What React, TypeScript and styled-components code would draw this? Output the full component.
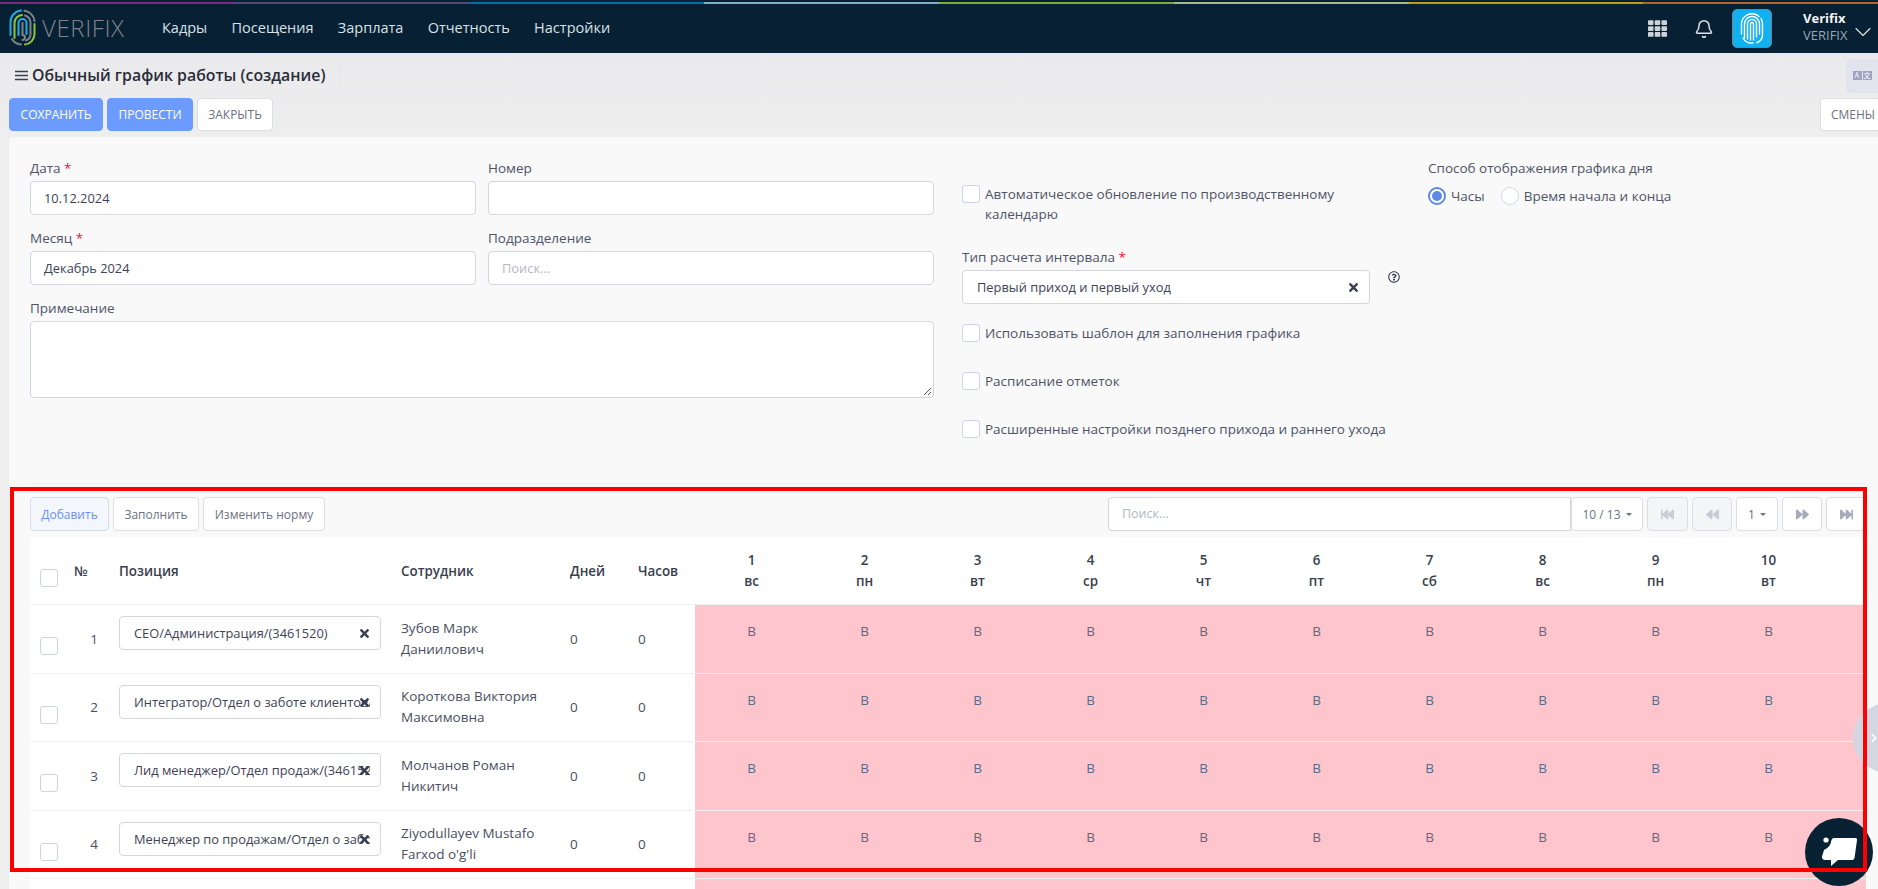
import React from 'react';
import styled, { createGlobalStyle } from 'styled-components';
import { Bell, ChevronDown, ChevronRight } from 'lucide-react';
import { FaTimes, FaRegQuestionCircle, FaFastBackward, FaBackward, FaForward, FaFastForward, FaTh } from 'react-icons/fa';

const Global = createGlobalStyle`
  html, body { margin: 0; padding: 0; height: 100%; overflow: hidden; }
  body { font-family: "Open Sans", "Liberation Sans", sans-serif; font-size: 13.5px; color: #3f4254; background: #ececed; }
  * { box-sizing: border-box; }
`;

const Page = styled.div`
  position: relative;
  width: 1878px;
  height: 889px;
  overflow: hidden;
  display: flex;
  flex-direction: column;
  background: linear-gradient(#e8e8ea, #eeeeef 140px);
`;

const Nav = styled.header`
  flex: none;
  height: 53px;
  background: #072033;
  padding-top: 2px;
  display: flex;
  flex-direction: column;
`;
const Strip = styled.div`
  display: grid;
  grid-template-columns: repeat(8, 1fr);
  height: 2px;
  flex: none;
`;
const StripPart = styled.span<{ $c: string }>`
  background: ${p => p.$c};
`;
const NavBody = styled.div`
  flex: 1;
  display: flex;
  align-items: center;
  padding: 0 1px 0 9px;
`;
const LogoWrap = styled.div`
  display: flex;
  align-items: center;
  width: 153px;
  margin-top: -2px;
`;
const LogoText = styled.span`
  margin-left: 6px;
  font-size: 24px;
  font-weight: 300;
  letter-spacing: 0.6px;
  color: #7d858b;
  line-height: 1;
`;
const NavLinks = styled.nav`
  display: flex;
  gap: 24.3px;
  margin-top: -3px;
`;
const NavLink = styled.span`
  color: #d9e0e6;
  font-size: 14.5px;
`;
const NavRight = styled.div`
  margin-left: auto;
  display: flex;
  align-items: center;
`;
const GridIcon = styled(FaTh)`
  width: 19px;
  height: 19px;
  color: #cfd3d9;
  margin-right: 27px;
`;
const BellIcon = styled(Bell)`
  color: #dfe3e7;
  margin-right: 18px;
`;
const AppButton = styled.div`
  width: 40px;
  height: 39px;
  border-radius: 5px;
  background: #0fb1f1;
  border: 1px solid #71828f;
  display: flex;
  align-items: center;
  justify-content: center;
  margin-right: 31px;
`;
const UserBlock = styled.div`
  display: flex;
  flex-direction: column;
  font-size: 13px;
  line-height: 17px;
  width: 46px;
  white-space: nowrap;
  margin-top: -4px;
`;
const UserName = styled.span`
  color: #f2f4f6;
  font-weight: 700;
`;
const UserOrg = styled.span`
  color: #9aa6b2;
`;
const UserCaret = styled(ChevronDown)`
  color: #d9e0e6;
  margin-top: 6px;
`;

const TitleRow = styled.div`
  flex: none;
  height: 45px;
  display: flex;
  align-items: center;
  padding-left: 15px;
`;
const TitleBox = styled.div`
  display: flex;
  align-items: center;
  gap: 4px;
  height: 26px;
  width: 325px;
  border-right: 1px solid #e6e6e7;
`;
const Burger = styled.svg`
  width: 13px;
  height: 11px;
  flex: none;
`;
const Title = styled.h1`
  margin: 0 0 2px;
  font-size: 15.85px;
  font-weight: 600;
  color: #2a2d3a;
`;
const LangChip = styled.div`
  margin-left: auto;
  width: 32px;
  height: 34px;
  background: #e2e3ec;
  border-radius: 5px 0 0 5px;
  display: flex;
  align-items: center;
  justify-content: center;
  gap: 1px;
`;
const LangMark = styled.span`
  width: 9px;
  height: 9px;
  background: #9ea3c1;
  color: #fff;
  font-size: 7px;
  line-height: 9px;
  text-align: center;
  font-family: "Noto Sans CJK SC", "Open Sans", sans-serif;
`;

const ActionRow = styled.div`
  flex: none;
  height: 33px;
  display: flex;
  gap: 4px;
  padding-left: 9px;
  margin-right: -8px;
`;
const ActionButton = styled.button<{ $primary?: boolean; $w: number; $right?: boolean }>`
  width: ${p => p.$w}px;
  height: 33px;
  padding: 0;
  border-radius: 4px;
  font-family: inherit;
  font-size: 12px;
  background: ${p => (p.$primary ? '#6b9bff' : '#fff')};
  color: ${p => (p.$primary ? '#fff' : '#6c7080')};
  border: 1px solid ${p => (p.$primary ? '#6b9bff' : '#dcdee4')};
  margin-left: ${p => (p.$right ? 'auto' : '0')};
`;

const Card = styled.main`
  flex: 1;
  margin: 6px 0 0 9px;
  background: #f9f9f9;
  border-radius: 4px 0 0 0;
  padding: 20px 12px 0 21px;
  min-height: 0;
`;
const FormGrid = styled.section`
  display: grid;
  grid-template-columns: 904px 438px 1fr;
  column-gap: 28px;
  height: 327px;
  border-bottom: 1px solid #eeeeee;
`;
const LeftForm = styled.div`
  display: grid;
  grid-template-columns: 446px 446px;
  column-gap: 12px;
  row-gap: 12px;
  align-content: start;
`;
const Field = styled.div<{ $wide?: boolean }>`
  grid-column: ${p => (p.$wide ? '1 / -1' : 'auto')};
`;
const Label = styled.label`
  display: block;
  font-size: 13.5px;
  line-height: 22px;
  margin-bottom: 2px;
  color: #4f5366;
`;
const Req = styled.span`
  color: #f4121e;
`;
const Input = styled.div<{ $placeholder?: boolean }>`
  height: 34px;
  background: #fff;
  border: 1px solid #d3d6df;
  border-radius: 4px;
  padding: 0 13px;
  font-size: 12.85px;
  line-height: 32px;
  color: ${p => (p.$placeholder ? '#b5b7c2' : '#3f4254')};
`;
const TextArea = styled.div`
  position: relative;
  height: 77px;
  background: #fff;
  border: 1px solid #d3d6df;
  border-radius: 4px;
`;
const Resizer = styled.svg`
  position: absolute;
  right: 1px;
  bottom: 1px;
  width: 10px;
  height: 10px;
`;
const MiddleForm = styled.div`
  display: flex;
  flex-direction: column;
`;
const CheckRow = styled.label<{ $top: number; $max?: number }>`
  display: flex;
  gap: 5px;
  align-items: flex-start;
  margin-top: ${p => p.$top}px;
  font-size: 13.5px;
  line-height: 20px;
  max-width: ${p => (p.$max ? `${p.$max}px` : 'none')};
  color: #4f5366;
  white-space: ${p => (p.$max ? 'normal' : 'nowrap')};
`;
const CheckBox = styled.span`
  flex: none;
  display: block;
  width: 18px;
  height: 18px;
  margin-top: 1px;
  background: #fff;
  border: 1px solid #cdd2e4;
  border-radius: 3px;
`;
const TypeField = styled.div`
  margin-top: 22px;
`;
const TypeRow = styled.div`
  display: flex;
  gap: 18px;
`;
const SelectBox = styled.div<{ $w: number }>`
  position: relative;
  flex: none;
  width: ${p => p.$w}px;
  height: 34px;
  background: #fff;
  border: 1px solid #d3d6df;
  border-radius: 4px;
  padding: 0 10px 0 14px;
  font-size: 12.85px;
  line-height: 32px;
  color: #3f4254;
`;
const SelectText = styled.span`
  display: block;
  white-space: nowrap;
  overflow: hidden;
`;
const ClearIcon = styled(FaTimes)`
  position: absolute;
  right: 9px;
  top: 10px;
  width: 13px;
  height: 13px;
  color: #3a3f4f;
`;
const HelpIcon = styled(FaRegQuestionCircle)`
  width: 16px;
  height: 16px;
  margin-top: -1px;
  color: #3a3f4f;
`;
const RadioRow = styled.div`
  display: flex;
  align-items: center;
  margin-top: 7px;
  font-size: 13.5px;
  line-height: 20px;
  color: #4f5366;
`;
const Radio = styled.span<{ $on?: boolean }>`
  display: flex;
  align-items: center;
  justify-content: center;
  width: 18px;
  height: 18px;
  border-radius: 50%;
  background: #fff;
  border: ${p => (p.$on ? '2px solid #5c8ae6' : '1px solid #d5d9e8')};
  margin-right: 5px;
  &::after {
    content: '';
    display: ${p => (p.$on ? 'block' : 'none')};
    width: 10px;
    height: 10px;
    border-radius: 50%;
    background: #5c8ae6;
  }
`;
const RadioText = styled.span`
  margin-right: 16px;
`;

const Toolbar = styled.div`
  display: flex;
  align-items: flex-start;
  gap: 4px;
  margin-top: 13px;
  height: 34px;
`;
const ToolButton = styled.button<{ $active?: boolean; $w: number; $off?: boolean; $caret?: boolean }>`
  flex: none;
  width: ${p => p.$w}px;
  height: 34px;
  padding: 0;
  font-family: inherit;
  font-size: 12px;
  border-radius: 4px;
  display: flex;
  align-items: center;
  justify-content: center;
  gap: 5px;
  border: 1px solid ${p => (p.$active ? '#d7dde6' : '#dcdee4')};
  background: ${p => (p.$active ? '#f3f6fb' : p.$off ? '#f4f5f7' : '#fff')};
  color: ${p => (p.$active ? '#6b8ff0' : '#6c7080')};
  &::after {
    content: ${p => (p.$caret ? "''" : 'none')};
    border-left: 3px solid transparent;
    border-right: 3px solid transparent;
    border-top: 3px solid #6c7080;
  }
  svg {
    width: 13px;
    height: 13px;
    color: ${p => (p.$off ? '#c9ccd5' : '#a6abb8')};
  }
`;
const SearchBox = styled.div`
  margin-left: auto;
  flex: none;
  width: 463px;
  height: 34px;
  margin-right: -4px;
  background: #fff;
  border: 1px solid #d3d6df;
  border-radius: 4px 0 0 4px;
  padding-left: 13px;
  font-size: 12.5px;
  line-height: 32px;
  color: #b5b7c2;
`;

const Sheet = styled.div`
  margin-top: 6px;
  background: #fff;
  overflow: hidden;
`;
const Row = styled.div<{ $head?: boolean }>`
  display: grid;
  grid-template-columns: 36px 44px 281px 169px 68px 67px repeat(11, 113px);
  height: ${p => (p.$head ? '68px' : '68.5px')};
  border-bottom: 1px solid #eeeff1;
  font-weight: ${p => (p.$head ? 600 : 400)};
  font-size: ${p => (p.$head ? '13.4px' : '13.5px')};
  color: ${p => (p.$head ? '#3a3e4e' : '#4a4e60')};
`;
const Cell = styled.div<{ $pad?: number }>`
  display: flex;
  align-items: center;
  padding-left: ${p => p.$pad ?? 10}px;
`;
const CheckCell = styled(Cell)`
  padding-top: 14px;
`;
const NumCell = styled(Cell)`
  justify-content: flex-end;
  padding-right: 12px;
`;
const PosCell = styled.div`
  padding: 11px 0 0 9px;
`;
const NameCell = styled(Cell)`
  line-height: 21px;
`;
const DayHead = styled.div`
  display: flex;
  flex-direction: column;
  align-items: center;
  justify-content: center;
  line-height: 21px;
`;
const DayCell = styled.div`
  background: #ffc5cc;
  text-align: center;
  padding-top: 16px;
  line-height: 20px;
  font-size: 13.5px;
  color: #5a6a8a;
`;

const SideToggle = styled.div`
  position: absolute;
  left: 1853px;
  top: 703px;
  width: 70px;
  height: 70px;
  border-radius: 50%;
  background: #d4d7e2;
  display: flex;
  align-items: center;
  padding-left: 14px;
  color: #fff;
  z-index: 5;
`;
const ChatBubble = styled.div`
  position: absolute;
  left: 1805px;
  top: 818px;
  width: 68px;
  height: 68px;
  border-radius: 50%;
  background: #082234;
  z-index: 6;
`;
const ChatIcon = styled.svg`
  width: 68px;
  height: 68px;
  display: block;
`;
const Annotation = styled.div`
  position: absolute;
  left: 10px;
  top: 487px;
  width: 1857px;
  height: 385px;
  border: 4px solid #ff0000;
  z-index: 10;
  pointer-events: none;
`;

const Logo = () => (
  <svg width="27" height="37" viewBox="0 0 27 37" fill="none" strokeLinecap="round" strokeWidth="2">
    <path d="M1.5 26V13A11.5 11.5 0 0 1 12 1.6" stroke="#27a9e1" />
    <path d="M15.5 1.8A11.5 11.5 0 0 1 25.5 12" stroke="#7d858b" />
    <path d="M25.5 15V25A10.500 10.500 0 0 1 16 35.500" stroke="#8cc63f" />
    <path d="M3 30A11 11 0 0 0 12 35.500" stroke="#7d858b" />
    <path d="M5.500 29V14A8 8 0 0 1 13 6" stroke="#8cc63f" />
    <path d="M16 6.500A8 8 0 0 1 21.500 14V25A7 7 0 0 1 17 31.500" stroke="#7d858b" />
    <path d="M9.500 26V14A4 4 0 0 1 17.500 14V25" stroke="#27a9e1" />
    <path d="M13.500 14V26A2 2 0 0 1 13.500 31" stroke="#7d858b" />
  </svg>
);

const Print = () => (
  <svg width="24" height="31" viewBox="0 0 24 31" fill="none" stroke="#fff" strokeWidth="1.400" strokeLinecap="round">
    <path d="M1.500 21V11A10.500 10.500 0 0 1 19 3.500" />
    <path d="M21 5.500A10.500 10.500 0 0 1 22.500 11V22A8 8 0 0 1 17 29.500" />
    <path d="M4.500 25V11A7.500 7.500 0 0 1 19.500 11V21" />
    <path d="M3 25A10 10 0 0 0 13 30" />
    <path d="M7.500 26V11A4.500 4.500 0 0 1 16.500 11V24" />
    <path d="M10.500 27V11A1.500 1.500 0 0 1 13.500 11V27" />
  </svg>
);

const stripColors = ['#7f2a7f', '#4f4a7a', '#0073a5', '#7fb0c5', '#7ea83a', '#a9b88a', '#bd9c1a', '#b5652b'];
const navItems = ['Кадры', 'Посещения', 'Зарплата', 'Отчетность', 'Настройки'];
const days: [number, string][] = [
  [1, 'вс'], [2, 'пн'], [3, 'вт'], [4, 'ср'], [5, 'чт'], [6, 'пт'], [7, 'сб'], [8, 'вс'], [9, 'пн'], [10, 'вт'],
];
const rows = [
  { n: 1, pos: 'СЕО/Администрация/(3461520)', name: ['Зубов Марк', 'Даниилович'] },
  { n: 2, pos: 'Интегратор/Отдел о заботе клиентов/(3461522)', name: ['Короткова Виктория', 'Максимовна'] },
  { n: 3, pos: 'Лид менеджер/Отдел продаж/(3461521)', name: ['Молчанов Роман', 'Никитич'] },
  { n: 4, pos: 'Менеджер по продажам/Отдел о заботе клиентов/(3461523)', name: ['Ziyodullayev Mustafo', "Farxod o'g'li"] },
];

export default function App() {
  return (
    <Page>
      <Global />
      <Nav>
        <Strip>
          {stripColors.map(c => (
            <StripPart key={c} $c={c} />
          ))}
        </Strip>
        <NavBody>
          <LogoWrap>
            <Logo />
            <LogoText>VERIFIX</LogoText>
          </LogoWrap>
          <NavLinks>
            {navItems.map(n => (
              <NavLink key={n}>{n}</NavLink>
            ))}
          </NavLinks>
          <NavRight>
            <GridIcon />
            <BellIcon size={20} strokeWidth={1.8} />
            <AppButton>
              <Print />
            </AppButton>
            <UserBlock>
              <UserName>Verifix</UserName>
              <UserOrg>VERIFIX</UserOrg>
            </UserBlock>
            <UserCaret size={28} strokeWidth={1} />
          </NavRight>
        </NavBody>
      </Nav>

      <TitleRow>
        <TitleBox>
          <Burger viewBox="0 0 13 11">
            <path d="M0 1.500H13M0 5.500H13M0 9.500H13" stroke="#3a3e4e" strokeWidth="1.600" />
          </Burger>
          <Title>Обычный график работы (создание)</Title>
        </TitleBox>
        <LangChip>
          <LangMark>A</LangMark>
          <LangMark>文</LangMark>
        </LangChip>
      </TitleRow>

      <ActionRow>
        <ActionButton $primary $w={94}>СОХРАНИТЬ</ActionButton>
        <ActionButton $primary $w={86}>ПРОВЕСТИ</ActionButton>
        <ActionButton $w={76}>ЗАКРЫТЬ</ActionButton>
        <ActionButton $w={66} $right>СМЕНЫ</ActionButton>
      </ActionRow>

      <Card>
        <FormGrid>
          <LeftForm>
            <Field>
              <Label>Дата <Req>*</Req></Label>
              <Input>10.12.2024</Input>
            </Field>
            <Field>
              <Label>Номер</Label>
              <Input />
            </Field>
            <Field>
              <Label>Месяц <Req>*</Req></Label>
              <Input>Декабрь 2024</Input>
            </Field>
            <Field>
              <Label>Подразделение</Label>
              <Input $placeholder>Поиск...</Input>
            </Field>
            <Field $wide>
              <Label>Примечание</Label>
              <TextArea>
                <Resizer viewBox="0 0 10 10">
                  <path d="M9 2L2 9M9 6L6 9" stroke="#555" strokeWidth="1" />
                </Resizer>
              </TextArea>
            </Field>
          </LeftForm>

          <MiddleForm>
            <CheckRow $top={27} $max={405}>
              <CheckBox />
              Автоматическое обновление по производственному календарю
            </CheckRow>
            <TypeField>
              <Label>Тип расчета интервала <Req>*</Req></Label>
              <TypeRow>
                <SelectBox $w={408}>
                  <SelectText>Первый приход и первый уход</SelectText>
                  <ClearIcon />
                </SelectBox>
                <HelpIcon />
              </TypeRow>
            </TypeField>
            <CheckRow $top={19}>
              <CheckBox />
              Использовать шаблон для заполнения графика
            </CheckRow>
            <CheckRow $top={28}>
              <CheckBox />
              Расписание отметок
            </CheckRow>
            <CheckRow $top={28}>
              <CheckBox />
              Расширенные настройки позднего прихода и раннего ухода
            </CheckRow>
          </MiddleForm>

          <div>
            <Label>Способ отображения графика дня</Label>
            <RadioRow>
              <Radio $on />
              <RadioText>Часы</RadioText>
              <Radio />
              <span>Время начала и конца</span>
            </RadioRow>
          </div>
        </FormGrid>

        <Toolbar>
          <ToolButton $active $w={79}>Добавить</ToolButton>
          <ToolButton $w={86}>Заполнить</ToolButton>
          <ToolButton $w={122}>Изменить норму</ToolButton>
          <SearchBox>Поиск...</SearchBox>
          <ToolButton $w={72} $caret>10 / 13</ToolButton>
          <ToolButton $w={41} $off><FaFastBackward /></ToolButton>
          <ToolButton $w={40} $off><FaBackward /></ToolButton>
          <ToolButton $w={42} $caret>1</ToolButton>
          <ToolButton $w={40}><FaForward /></ToolButton>
          <ToolButton $w={40}><FaFastForward /></ToolButton>
        </Toolbar>

        <Sheet>
          <Row $head>
            <CheckCell><CheckBox /></CheckCell>
            <Cell $pad={8}>№</Cell>
            <Cell $pad={9}>Позиция</Cell>
            <Cell>Сотрудник</Cell>
            <Cell>Дней</Cell>
            <Cell>Часов</Cell>
            {days.map(([d, w]) => (
              <DayHead key={d}>
                <span>{d}</span>
                <span>{w}</span>
              </DayHead>
            ))}
            <DayHead />
          </Row>
          {rows.map(r => (
            <Row key={r.n}>
              <CheckCell><CheckBox /></CheckCell>
              <NumCell>{r.n}</NumCell>
              <PosCell>
                <SelectBox $w={262}>
                  <SelectText>{r.pos}</SelectText>
                  <ClearIcon />
                </SelectBox>
              </PosCell>
              <NameCell>{r.name[0]}<br />{r.name[1]}</NameCell>
              <Cell>0</Cell>
              <Cell>0</Cell>
              {days.map(([d]) => (
                <DayCell key={d}>В</DayCell>
              ))}
              <DayCell />
            </Row>
          ))}
          <Row>
            <Cell />
            <Cell />
            <Cell />
            <Cell />
            <Cell />
            <Cell />
            {days.map(([d]) => (
              <DayCell key={d} />
            ))}
            <DayCell />
          </Row>
        </Sheet>
      </Card>

      <SideToggle>
        <ChevronRight size={14} strokeWidth={3} />
      </SideToggle>
      <ChatBubble>
        <ChatIcon viewBox="0 0 68 68">
          <circle cx="21" cy="22" r="2.600" fill="#fff" />
          <path
            d="M29 20H50a2 2 0 0 1 2 2.300L49.500 40a2.500 2.500 0 0 1-2.500 2H33l-7 6V42H20a3 3 0 0 1-3-3.500L19 32c2-1 6-3 7-8 .3-2 1.200-4 3-4z"
            fill="#fff"
          />
        </ChatIcon>
      </ChatBubble>
      <Annotation />
    </Page>
  );
}
